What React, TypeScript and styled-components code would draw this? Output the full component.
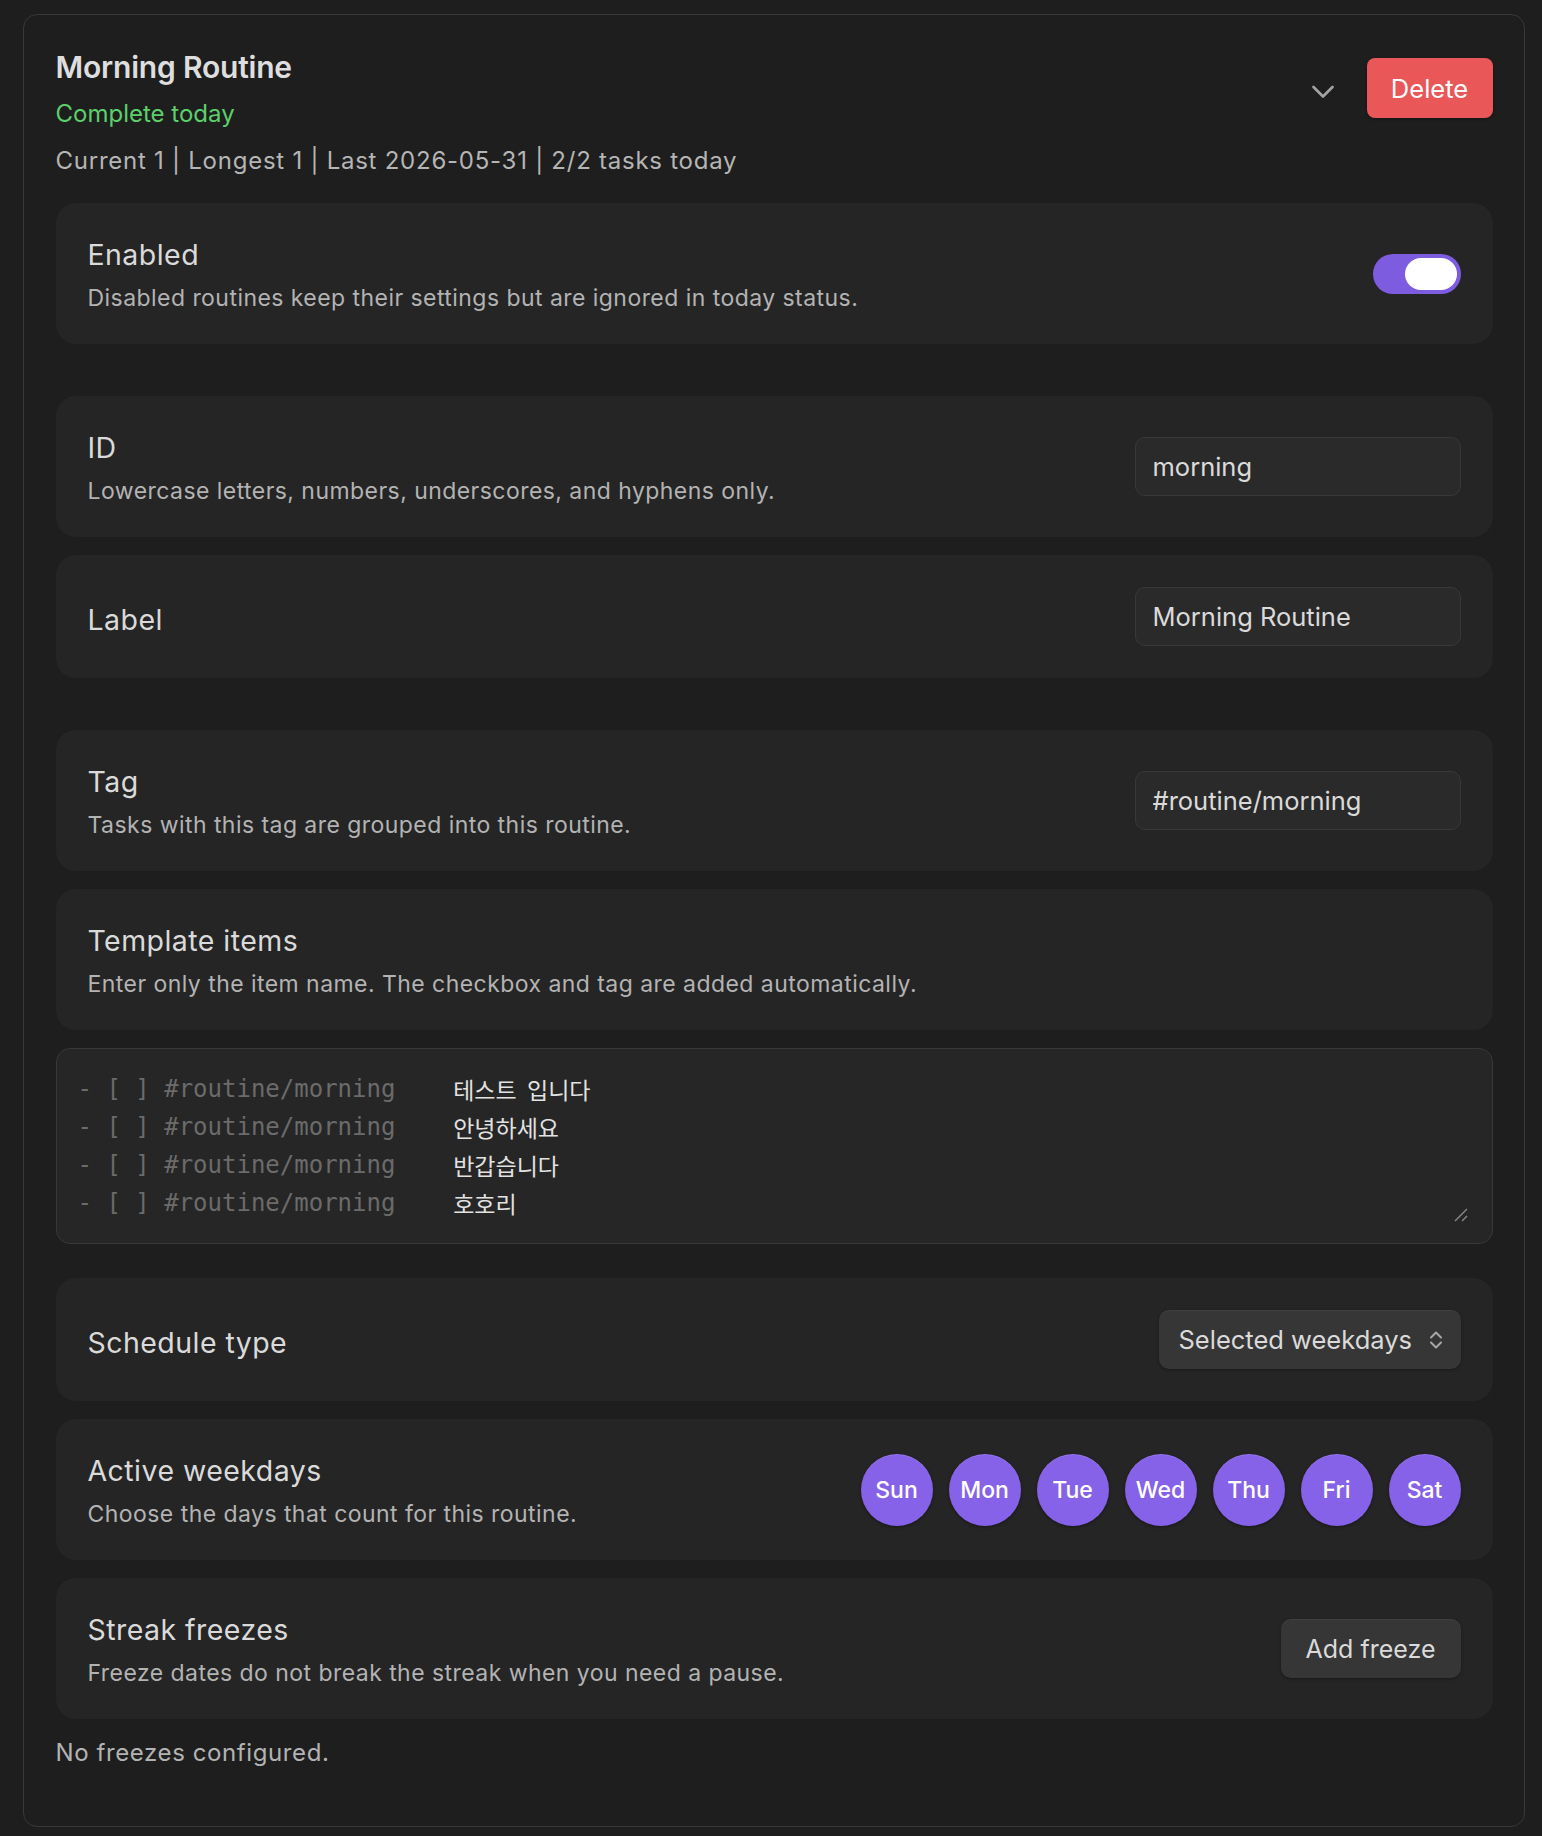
import React from "react"
import styled, { createGlobalStyle } from "styled-components"

const GlobalStyle = createGlobalStyle`
    html, body {
        margin: 0;
        padding: 0;
        background: #1e1e1e;
    }
    body {
        font-family: Inter, "Noto Sans", sans-serif;
        color: #dadada;
    }
`

const WEEKDAYS = ["Sun", "Mon", "Tue", "Wed", "Thu", "Fri", "Sat"]
const TEMPLATE_ITEMS = ["테스트  입니다", "안녕하세요", "반갑습니다", "호호리"]

const ChevronDown = () => (
    <svg width="22" height="14" viewBox="0 0 22 14" fill="none">
        <polyline points="1.5,2 11,11.5 20.5,2" stroke="#a3a3a3" strokeWidth="2.6" strokeLinecap="round" strokeLinejoin="round" />
    </svg>
)

const UpDown = () => (
    <svg width="14" height="20" viewBox="0 0 14 20" fill="none">
        <path d="M2 7.5 L7 2.5 L12 7.5 M2 12.5 L7 17.5 L12 12.5" stroke="#a8a8a8" strokeWidth="2" strokeLinecap="round" strokeLinejoin="round" />
    </svg>
)

export default function App() {
    return (
        <>
            <GlobalStyle />
            <Page>
                <Card>
                    <Header>
                        <HeaderText>
                            <Title>Morning Routine</Title>
                            <Status>Complete today</Status>
                            <Stats>Current 1 | Longest 1 | Last 2026-05-31 | 2/2 tasks today</Stats>
                        </HeaderText>
                        <HeaderActions>
                            <IconButton><ChevronDown /></IconButton>
                            <DangerButton>Delete</DangerButton>
                        </HeaderActions>
                    </Header>

                    <Settings>
                        <Setting>
                            <SettingInfo>
                                <SettingName>Enabled</SettingName>
                                <SettingDesc>Disabled routines keep their settings but are ignored in today status.</SettingDesc>
                            </SettingInfo>
                            <Toggle $on><Knob /></Toggle>
                        </Setting>

                        <Setting $spaced>
                            <SettingInfo>
                                <SettingName>ID</SettingName>
                                <SettingDesc>Lowercase letters, numbers, underscores, and hyphens only.</SettingDesc>
                            </SettingInfo>
                            <TextInput readOnly value="morning" />
                        </Setting>

                        <Setting>
                            <SettingInfo>
                                <SettingName>Label</SettingName>
                            </SettingInfo>
                            <TextInput readOnly value="Morning Routine" />
                        </Setting>

                        <Setting $spaced>
                            <SettingInfo>
                                <SettingName>Tag</SettingName>
                                <SettingDesc>Tasks with this tag are grouped into this routine.</SettingDesc>
                            </SettingInfo>
                            <TextInput readOnly value="#routine/morning" />
                        </Setting>

                        <Setting>
                            <SettingInfo>
                                <SettingName>Template items</SettingName>
                                <SettingDesc>Enter only the item name. The checkbox and tag are added automatically.</SettingDesc>
                            </SettingInfo>
                        </Setting>

                        <TemplateBox>
                            {TEMPLATE_ITEMS.map((item) => (
                                <TemplateLine key={item}>
                                    <Prefix>{"- [ ] #routine/morning    "}</Prefix>
                                    <ItemText>{item}</ItemText>
                                </TemplateLine>
                            ))}
                            <ResizeHandle width="16" height="16" viewBox="0 0 16 16">
                                <path d="M2 14 L14 2 M9 14 L14 9" stroke="#8a8a8a" strokeWidth="1.4" />
                            </ResizeHandle>
                        </TemplateBox>

                        <Setting>
                            <SettingInfo>
                                <SettingName>Schedule type</SettingName>
                            </SettingInfo>
                            <SelectBox>
                                <span>Selected weekdays</span>
                                <UpDown />
                            </SelectBox>
                        </Setting>

                        <Setting>
                            <SettingInfo>
                                <SettingName>Active weekdays</SettingName>
                                <SettingDesc>Choose the days that count for this routine.</SettingDesc>
                            </SettingInfo>
                            <DayRow>
                                {WEEKDAYS.map((d) => (
                                    <DayButton key={d}>{d}</DayButton>
                                ))}
                            </DayRow>
                        </Setting>

                        <Setting>
                            <SettingInfo>
                                <SettingName>Streak freezes</SettingName>
                                <SettingDesc>Freeze dates do not break the streak when you need a pause.</SettingDesc>
                            </SettingInfo>
                            <PlainButton>Add freeze</PlainButton>
                        </Setting>
                    </Settings>

                    <EmptyNote>No freezes configured.</EmptyNote>
                </Card>
            </Page>
        </>
    )
}

const Page = styled.div`
    padding: 14px 17px 13px 23px;
    min-height: 1836px;
    box-sizing: border-box;
`

const Card = styled.div`
    width: 1502px;
    box-sizing: border-box;
    border: 1.5px solid #383838;
    border-radius: 14px;
    background: #1e1e1e;
    padding: 32px 31.5px 56px 31.5px;
`

const Header = styled.div`
    display: flex;
    justify-content: space-between;
    align-items: flex-start;
`

const HeaderText = styled.div`
    display: flex;
    flex-direction: column;
    margin-top: 3px;
`

const Title = styled.div`
    font-size: 30px;
    font-weight: 600;
    line-height: 35px;
    color: #dedede;
    letter-spacing: -0.2px;
`

const Status = styled.div`
    margin-top: 11px;
    font-size: 24px;
    line-height: 35px;
    color: #5ccf6b;
`

const Stats = styled.div`
    margin-top: 12px;
    font-size: 24px;
    line-height: 35px;
    letter-spacing: 0.75px;
    color: #b5b5b5;
`

const HeaderActions = styled.div`
    display: flex;
    align-items: center;
    gap: 33px;
    margin-top: 11px;
`

const IconButton = styled.div`
    display: flex;
    align-items: center;
    justify-content: center;
    padding-top: 7px;
`

const DangerButton = styled.button`
    height: 60px;
    width: 126px;
    border: none;
    border-radius: 8px;
    background: #e95758;
    color: #ffffff;
    font-family: Inter, sans-serif;
    font-size: 25.5px;
    box-shadow: 0 1px 3px rgba(0, 0, 0, 0.35);
`

const Settings = styled.div`
    display: flex;
    flex-direction: column;
    gap: 18px;
    margin-top: 25px;
`

const Setting = styled.div<{ $spaced?: boolean }>`
    display: flex;
    align-items: center;
    justify-content: space-between;
    gap: 24px;
    padding: 32px;
    border-radius: 20px;
    background: #252525;
    margin-top: ${({ $spaced }) => ($spaced ? "34px" : "0")};
`

const SettingInfo = styled.div`
    display: flex;
    flex-direction: column;
    gap: 10px;
    min-height: 34px;
    justify-content: center;
    padding-top: 3px;
    margin-bottom: -3px;
`

const SettingName = styled.div`
    font-size: 28.5px;
    line-height: 34px;
    color: #dadada;
    letter-spacing: 0.45px;
`

const SettingDesc = styled.div`
    font-size: 23px;
    line-height: 33px;
    letter-spacing: 0.45px;
    color: #b3b3b3;
`

const Toggle = styled.div<{ $on?: boolean }>`
    width: 88px;
    height: 40px;
    box-sizing: border-box;
    padding: 4px;
    border-radius: 20px;
    background: ${({ $on }) => ($on ? "#7e5ce0" : "#3a3a3a")};
    display: flex;
    justify-content: ${({ $on }) => ($on ? "flex-end" : "flex-start")};
`

const Knob = styled.div`
    width: 52px;
    height: 32px;
    border-radius: 16px;
    background: #ffffff;
`

const TextInput = styled.input`
    width: 326px;
    height: 59px;
    box-sizing: border-box;
    padding: 0 17px;
    border: 1.5px solid #383838;
    border-radius: 10px;
    background: #2a2a2a;
    color: #dadada;
    font-family: Inter, sans-serif;
    font-size: 25.5px;
    outline: none;
`

const TemplateBox = styled.div`
    position: relative;
    display: flex;
    flex-direction: column;
    padding: 21px 21px 21px 21px;
    min-height: 196px;
    box-sizing: border-box;
    border: 1.5px solid #383838;
    border-radius: 14px;
    background: #262626;
    margin-bottom: 16px;
`

const TemplateLine = styled.div`
    display: flex;
    align-items: center;
    height: 38px;
    white-space: pre;
`

const Prefix = styled.span`
    font-family: "DejaVu Sans Mono", "Liberation Mono", monospace;
    font-size: 24px;
    color: #6b6b6b;
`

const ItemText = styled.span`
    font-family: "Noto Sans CJK KR", "Noto Sans", sans-serif;
    font-size: 23px;
    color: #e2e2e2;
`

const ResizeHandle = styled.svg`
    position: absolute;
    right: 23px;
    bottom: 20px;
`

const SelectBox = styled.div`
    width: 302px;
    height: 59px;
    box-sizing: border-box;
    padding: 0 18px 0 20px;
    border-radius: 10px;
    background: #363636;
    box-shadow: 0 1px 3px rgba(0, 0, 0, 0.35), inset 0 1px 0 rgba(255, 255, 255, 0.05);
    display: flex;
    align-items: center;
    justify-content: space-between;
    font-size: 25.5px;
    color: #dadada;
`

const DayRow = styled.div`
    display: flex;
    gap: 16px;
`

const DayButton = styled.div`
    width: 72px;
    height: 72px;
    border-radius: 50%;
    background: #8562e7;
    color: #ffffff;
    font-size: 23px;
    font-weight: 500;
    display: flex;
    align-items: center;
    justify-content: center;
    box-shadow: 0 1px 3px rgba(0, 0, 0, 0.4), inset 0 1px 0 rgba(255, 255, 255, 0.12);
`

const PlainButton = styled.button`
    width: 180px;
    height: 59px;
    border: none;
    border-radius: 10px;
    background: #363636;
    color: #dadada;
    font-family: Inter, sans-serif;
    font-size: 25px;
    box-shadow: 0 1px 3px rgba(0, 0, 0, 0.35), inset 0 1px 0 rgba(255, 255, 255, 0.05);
`

const EmptyNote = styled.div`
    margin-top: 16px;
    font-size: 24px;
    line-height: 35px;
    letter-spacing: 0.6px;
    color: #b3b3b3;
`
